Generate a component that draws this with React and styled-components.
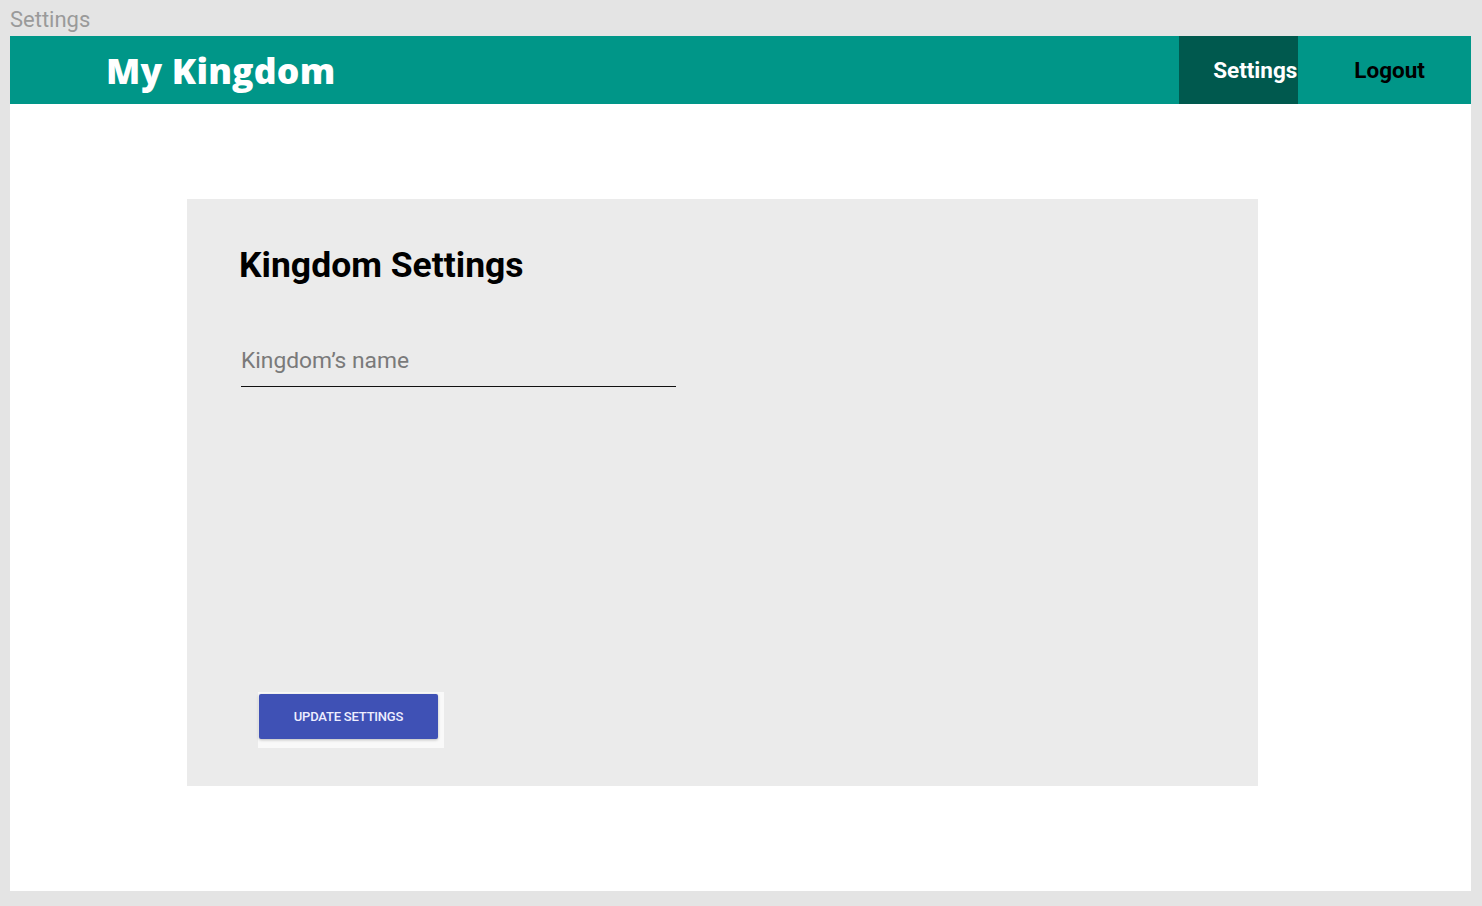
import React from "react";
import styled, { createGlobalStyle } from "styled-components";

const Global = createGlobalStyle`
  body {
    margin: 0;
    background: #e4e4e4;
    font-family: Roboto, "Liberation Sans", sans-serif;
  }
`;

const Page = styled.div`
  width: 1482px;
  height: 906px;
  display: flex;
  flex-direction: column;
`;

const FrameTitle = styled.div`
  height: 36px;
  padding-left: 10px;
  font-size: 22px;
  line-height: 40px;
  color: #9a9a9a;
  box-sizing: border-box;
`;

const Frame = styled.div`
  margin-left: 10px;
  width: 1461px;
  height: 855px;
  background: #fff;
  display: flex;
  flex-direction: column;
`;

const Header = styled.header`
  height: 68px;
  background: #009688;
  display: flex;
  align-items: stretch;
`;

const Brand = styled.h1`
  margin: 0 0 0 96px;
  flex: 1;
  font-family: "Open Sans", sans-serif;
  font-weight: 800;
  font-size: 35.5px;
  color: #fff;
  line-height: 68px;
  letter-spacing: 0.2px;
`;

const NavItem = styled.a`
  display: flex;
  align-items: center;
  font-size: 22.5px;
  font-weight: 700;
  color: ${p => (p.active ? "#fff" : "#000")};
  background: ${p => (p.active ? "#00594e" : "transparent")};
  padding: ${p => (p.active ? "0 1px 0 34px" : "0 46px 0 56px")};
  text-decoration: none;
`;

const Card = styled.section`
  margin: 95px 0 0 177px;
  width: 1071px;
  height: 587px;
  background: #ebebeb;
  box-sizing: border-box;
  padding: 42px 0 0 52px;
  display: flex;
  flex-direction: column;
`;

const Heading = styled.h2`
  margin: 0;
  font-size: 35.5px;
  font-weight: 700;
  color: #000;
  line-height: 48px;
`;

const Field = styled.label`
  margin: 54px 0 0 2px;
  width: 435px;
  display: flex;
  flex-direction: column;
`;

const Input = styled.input`
  border: none;
  border-bottom: 1px solid #111;
  background: transparent;
  font-family: Roboto, sans-serif;
  font-size: 22.8px;
  padding: 4px 0 12px;
  outline: none;
  &::placeholder {
    color: #7a7a7a;
  }
`;

const ButtonWrap = styled.div`
  position: relative;
  z-index: 0;
  display: flex;
  margin: 307px 0 0 20px;
`;

const Button = styled.button`
  position: relative;
  width: 179px;
  height: 45px;
  border: none;
  border-radius: 2px;
  background: #3f51b5;
  color: #eef;
  font-family: Roboto, sans-serif;
  font-size: 13px;
  font-weight: 500;
  letter-spacing: -0.2px;
  text-transform: uppercase;
  box-shadow: 0 1px 3px rgba(0, 0, 0, 0.25);
  &::before {
    content: "";
    position: absolute;
    inset: -2px -6px -9px -1px;
    background: #f9f9f9;
    z-index: -1;
  }
`;

export default function App() {
  return (
    <Page>
      <Global />
      <FrameTitle>Settings</FrameTitle>
      <Frame>
        <Header>
          <Brand>My Kingdom</Brand>
          <NavItem active>Settings</NavItem>
          <NavItem>Logout</NavItem>
        </Header>
        <Card>
          <Heading>Kingdom Settings</Heading>
          <Field>
            <Input placeholder="Kingdom’s name" />
          </Field>
          <ButtonWrap>
            <Button>Update Settings</Button>
          </ButtonWrap>
        </Card>
      </Frame>
    </Page>
  );
}
